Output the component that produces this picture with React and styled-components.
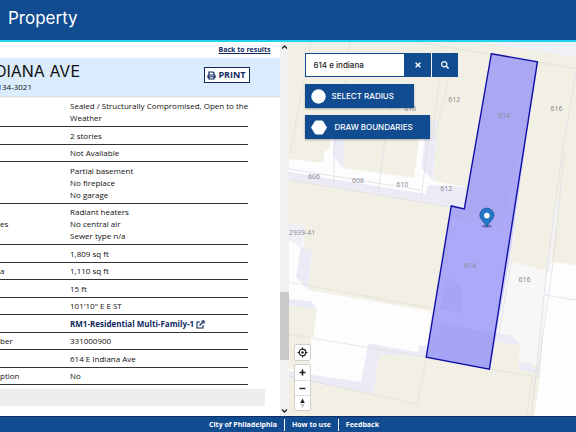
import React from "react";
import styled, { createGlobalStyle } from "styled-components";
import { FaTimes, FaSearch } from "react-icons/fa";

const NAVY = "#114c91";
const DARK = "#10285f";

const rows = [
  { label: "", values: ["Sealed / Structurally Compromised, Open to the", "Weather"] },
  { label: "", values: ["2 stories"] },
  { label: "", values: ["Not Available"] },
  { label: "", values: ["Partial basement", "No fireplace", "No garage"] },
  { label: "es", values: ["Radiant heaters", "No central air", "Sewer type n/a"] },
  { label: "", values: ["1,809 sq ft"] },
  { label: "a", values: ["1,110 sq ft"] },
  { label: "", values: ["15 ft"] },
  { label: "", values: ["101'10\" E E ST"] },
  { label: "", values: ["RM1-Residential Multi-Family-1"], link: true },
  { label: "ber", values: ["331000900"] },
  { label: "", values: ["614 E Indiana Ave"] },
  { label: "ption", values: ["No"] },
];

const parcelLabels = [
  { x: 454, y: 102, text: "612" },
  { x: 410, y: 111, text: "610" },
  { x: 504, y: 118, text: "614" },
  { x: 556, y: 111, text: "616" },
  { x: 314, y: 179, text: "606" },
  { x: 358, y: 183, text: "608" },
  { x: 402, y: 187, text: "610" },
  { x: 446, y: 191, text: "612" },
  { x: 302, y: 235, text: "2939-41" },
  { x: 470, y: 268, text: "614" },
  { x: 524, y: 282, text: "616" },
];

const PrintIcon = () => (
  <svg width="9" height="9" viewBox="0 0 18 18" fill="none" stroke={DARK} strokeWidth="2.400">
    <path d="M4 8V2h8l2 2v4M4 13H2v-4l1-1h12l1 1v4h-2M4 11.500h10V16H4z" />
  </svg>
);

const ExternalIcon = () => (
  <svg width="9" height="9" viewBox="0 0 18 18" fill="none" stroke={DARK} strokeWidth="2.200">
    <path d="M8 4H2v12h12v-6M7 11l9-9" />
    <path d="M10.500 2H16v5.500" />
  </svg>
);

const Chevron = ({ down }) => (
  <svg width="7" height="6" viewBox="0 0 7 6" fill="none" stroke="#222" strokeWidth="1.400">
    <path d={down ? "M1 1.500l2.500 2.500L6 1.500" : "M1 4.500L3.500 2 6 4.500"} />
  </svg>
);

const ParcelMap = () => (
  <MapSvg viewBox="289 42 287 374" preserveAspectRatio="xMidYMid slice">
    <rect x="0" y="0" width="900" height="900" fill="#f2f0e5" />
    {/* open ground */}
    <g fill="#fdfdfe">
      <path d="M289 159L323 163 324 153 330 148 332 120H346L343 168 414 178 421 120H437L433 181 466 187 464 209 450 206 289 178z" />
      <path d="M289 224L305 226 303 248 312 250 308 290 431 311 426 357 379 354 373 394 289 378V368L309 372 311 337 317 309 289 305z" />
      <path d="M551 262L576 265V416H534L540 373 546 272z" />
    </g>
    <path d="M289 305L317 309 313 338 311 337 309 372 289 368z" fill="#f2f0e5" />
    <path d="M508 261L547 271 538 366 519 362V345L511 335 496 333z" fill="#f7f7f8" />
    <path d="M508 261L511 262 519 200 516 200zM556 200H559L549 272H545z" fill="#f3f2f1" />
    {/* paved strips */}
    <g fill="#ebebf6">
      <path d="M480 42H576V58L545 52 512 48z" fill="#f0f0f7" />
      <path d="M289 172L425 194 428 185 466 187 464 209 450 206 289 179z" />
      <path d="M335 120H346L343 168 333 155z" />
      <path d="M427 120H437L433 181 421 168z" />
      <path d="M289 224L305 226 303 240 301 248 289 240z" fill="#f0eff6" />
      <path d="M301 247L312 250 308 290 296 277z" />
      <path d="M289 299L311 301 317 309 289 305z" />
      <path d="M289 371L361 382 368 343 418 352 419 345 427 346 426 357 379 354 373 394 289 378z" />
      <path d="M496 333L511 335 520 345 495 342zM518 361L530 363 540 374 518 369z" />
    </g>
    <g fill="none" stroke="#dadae6" strokeWidth="0.700">
      <path d="M289 180L450 207M289 169L420 190M334 140V185M385 139L378 192M428 140L421 198" />
      <path d="M576 70L562 150 546 272 531 416M564 150L553 260 537 374" />
      <path d="M545 295L576 300M511 260L498 338" />
    </g>
    <g fill="none" stroke="#e0ded3" strokeWidth="0.700">
      <path d="M420 43L576 69M311 42L290 155M350 42L338 138M455 52L434 139M442 52L432 139M385 139L393 100" />
      <path d="M289 282L431 308M289 334L426 357M289 376L417 404 426 360M490 369L540 377M532 376L526 416" />
    </g>
    {/* selected parcel */}
    <path d="M491 54L537 62 489 369 426 357 451 206 464 209z" fill="#6260ff" fillOpacity="0.500" />
    <path d="M519 145L525 147 509 260 490 369 426 357 435 300 444 270 451 218 502 226z" fill="#b0aeff" fillOpacity="0.450" />
    <g fill="#8d88e5" fillOpacity="0.180">
      <path d="M445 279L453 280 463 289 461 313 440 309z" />
      <path d="M434 322L495 333 490 368 428 357z" />
    </g>
    <path d="M491 54L537 62 489 369 426 357 451 206 464 209z" fill="none" stroke="#1010a8" strokeWidth="1.400" />
    <g fill="#8c8c96" fontSize="7" textAnchor="middle" fontFamily="'Noto Sans', 'Open Sans', sans-serif">
      {parcelLabels.map(({ x, y, text }) => (
        <text key={`${x}-${y}`} x={x} y={y}>
          {text}
        </text>
      ))}
    </g>
    <ellipse cx="486.500" cy="226" rx="5" ry="1.500" fill="#4a4a90" opacity="0.600" />
    <path
      d="M486.500 227C484.500 222 479.500 219.500 479.500 215a7 6.800 0 0 1 14 0C493.500 219.500 488.500 222 486.500 227z"
      fill="#2277c8"
      stroke="#175496"
      strokeWidth="0.800"
    />
    <circle cx="486.500" cy="215.500" r="2.800" fill="#fff" />
  </MapSvg>
);

const App = () => {
  return (
    <Page>
      <GlobalStyle />
      <Header>
        <Title>Property</Title>
      </Header>
      <Main>
        <Panel>
          <BackRow>
            <BackLink href="#results">Back to results</BackLink>
          </BackRow>
          <AddressBar>
            <Address>
              <Street>DIANA AVE</Street>
              <Zip>134-3021</Zip>
            </Address>
            <PrintButton type="button">
              <PrintIcon />
              PRINT
            </PrintButton>
          </AddressBar>
          <Details>
            <tbody>
              {rows.map(({ label, values, link }, i) => (
                <Row key={i}>
                  <Label scope="row">{label}</Label>
                  <Value>
                    {link ? (
                      <ZoningLink href="#zoning">
                        {values[0]} <ExternalIcon />
                      </ZoningLink>
                    ) : (
                      values.map((value) => <div key={value}>{value}</div>)
                    )}
                  </Value>
                </Row>
              ))}
            </tbody>
          </Details>
          <SectionBar />
        </Panel>
        <Scrollbar>
          <Chevron />
          <Track>
            <Thumb />
          </Track>
          <Chevron down />
        </Scrollbar>
        <MapArea>
          <ParcelMap />
          <Tools>
            <SearchBox>
              <SearchInput type="text" aria-label="Search" defaultValue="614 e indiana" />
              <IconButton type="button" aria-label="Clear">
                <FaTimes size={8} />
              </IconButton>
              <IconButton type="button" aria-label="Search" $gap>
                <FaSearch size={8} />
              </IconButton>
            </SearchBox>
            <ToolButton type="button" $width={109}>
              <svg width="15" height="15" viewBox="0 0 15 15">
                <circle cx="7.500" cy="7.500" r="7.200" fill="#fff" />
              </svg>
              SELECT RADIUS
            </ToolButton>
            <ToolButton type="button" $width={125} $wide>
              <svg width="16" height="15" viewBox="0 0 16 15">
                <path d="M4.500 1h7L15.500 7.500l-4 6.500h-7L0.500 7.500z" fill="#fff" stroke="#fff" strokeLinejoin="round" />
              </svg>
              DRAW BOUNDARIES
            </ToolButton>
          </Tools>
          <MapControls>
            <ControlGroup>
              <ControlButton type="button" aria-label="Locate">
                <svg width="11" height="11" viewBox="0 0 11 11" fill="none" stroke="#222">
                  <circle cx="5.500" cy="5.500" r="3.300" strokeWidth="1.300" />
                  <circle cx="5.500" cy="5.500" r="1.300" fill="#222" stroke="none" />
                  <path d="M5.500 0.500v2M5.500 8.500v2M0.500 5.500h2M8.500 5.500h2" />
                </svg>
              </ControlButton>
            </ControlGroup>
            <ControlGroup>
              <ControlButton type="button" aria-label="Zoom in">
                <svg width="7" height="7" viewBox="0 0 7 7" stroke="#222" strokeWidth="1.600">
                  <path d="M3.500 0.500v6M0.500 3.500h6" />
                </svg>
              </ControlButton>
              <ControlButton type="button" aria-label="Zoom out">
                <svg width="7" height="7" viewBox="0 0 7 7" stroke="#222" strokeWidth="1.400">
                  <path d="M0.500 3.500h6" />
                </svg>
              </ControlButton>
              <ControlButton type="button" aria-label="Reset bearing">
                <svg width="7" height="11" viewBox="0 0 7 11">
                  <path d="M3.500 0.500L5.800 5H1.200z" fill="#222" />
                  <path d="M3.500 10L5.500 6h-4z" fill="#bbb" />
                </svg>
              </ControlButton>
            </ControlGroup>
          </MapControls>
        </MapArea>
      </Main>
      <Footer>
        <FooterLink href="#city">City of Philadelphia</FooterLink>
        <FooterLink href="#help">How to use</FooterLink>
        <FooterLink href="#feedback">Feedback</FooterLink>
      </Footer>
    </Page>
  );
};

export default App;

//style
const GlobalStyle = createGlobalStyle`
  * {
    box-sizing: border-box;
  }

  body {
    margin: 0;
    overflow: hidden;
    font-family: "Open Sans", "Noto Sans", sans-serif;
    font-size: 8px;
    line-height: 12px;
    color: #111;
    background: #fff;
  }

  button, input {
    margin: 0;
    padding: 0;
    border: 0;
    font: inherit;
  }
`;

const Page = styled.div`
  display: flex;
  flex-direction: column;
  height: 100vh;
`;

const Header = styled.header`
  display: flex;
  align-items: center;
  height: 42px;
  padding: 0 8px 5px;
  background: ${NAVY};
  border-bottom: 2px solid #20d4ee;
  flex-shrink: 0;
`;

const Title = styled.h1`
  margin: 0;
  font-family: Inter, sans-serif;
  font-size: 17px;
  font-weight: 400;
  line-height: 24px;
  color: #fff;
`;

const Main = styled.main`
  display: flex;
  flex: 1;
  min-height: 0;
`;

const Panel = styled.section`
  flex: 35 1 0;
  min-width: 0;
  overflow: hidden;
`;

const BackRow = styled.div`
  display: flex;
  justify-content: flex-end;
  height: 16px;
  padding: 2px 9px 0 0;
`;

const BackLink = styled.a`
  font-size: 7px;
  font-weight: 700;
  color: ${DARK};
`;

const AddressBar = styled.div`
  display: flex;
  justify-content: space-between;
  align-items: flex-start;
  height: 38px;
  padding: 3px 30px 0 0;
  background: #daecfd;
  box-shadow: 0 1px 2px #ccd3da;
`;

const Address = styled.div`
  display: flex;
  flex-direction: column;
  align-items: flex-end;
  width: 80px;
`;

const Street = styled.h2`
  margin: 0;
  font-family: Inter, sans-serif;
  font-size: 16px;
  font-weight: 400;
  line-height: 20px;
  white-space: nowrap;
`;

const Zip = styled.div`
  margin-right: 48px;
  white-space: nowrap;
`;

const PrintButton = styled.button`
  display: flex;
  align-items: center;
  justify-content: center;
  gap: 2px;
  width: 46px;
  height: 16px;
  margin-top: 6px;
  border: 1px solid ${DARK};
  background: #fff;
  font-size: 9px;
  font-weight: 700;
  color: ${DARK};
`;

const Details = styled.table`
  width: 248px;
  margin-top: 2px;
  border-spacing: 0;
  table-layout: fixed;
`;

const Label = styled.th`
  width: 70px;
  padding: 2px 0;
  font-weight: 400;
  text-align: left;
  vertical-align: middle;
  border-bottom: 1px solid #333;
`;

const Value = styled.td`
  padding: 2px 0;
  border-bottom: 1px solid #333;
  white-space: nowrap;
`;

const Row = styled.tr`
  &:nth-child(even) > * {
    padding-top: 3px;
  }
`;

const ZoningLink = styled.a`
  display: flex;
  align-items: center;
  gap: 2px;
  font-weight: 700;
  color: ${DARK};
  text-decoration: none;
`;

const SectionBar = styled.div`
  height: 17px;
  margin: 4px 15px 0 0;
  background: #eee;
`;

const Scrollbar = styled.div`
  display: flex;
  flex-direction: column;
  align-items: center;
  width: 9px;
  padding: 2px 0;
  background: #f1f1f1;
`;

const Track = styled.div`
  display: flex;
  flex: 1;
  flex-direction: column;
  justify-content: flex-end;
  width: 100%;
  padding-bottom: 48px;
`;

const Thumb = styled.div`
  height: 22%;
  background: #c9c9c9;
`;

const MapArea = styled.section`
  position: relative;
  flex: 36 1 0;
  min-width: 0;
  overflow: hidden;
`;

const MapSvg = styled.svg`
  display: block;
  width: 100%;
  height: 100%;
`;

const Tools = styled.div`
  position: absolute;
  top: 11px;
  left: 16px;
  display: flex;
  flex-direction: column;
  gap: 7px;
`;

const SearchBox = styled.div`
  display: flex;
  height: 24px;
`;

const SearchInput = styled.input`
  width: 100px;
  padding: 0 8px;
  border: 1px solid ${NAVY};
  background: #fff;
  font-family: Inter, sans-serif;
  font-size: 8px;
  font-weight: 500;
  color: #222;
`;

const IconButton = styled.button`
  display: flex;
  align-items: center;
  justify-content: center;
  width: 26px;
  margin-left: ${({ $gap }) => ($gap ? "1px" : "0")};
  background: ${NAVY};
  color: #fff;
`;

const ToolButton = styled.button`
  display: flex;
  align-items: center;
  gap: ${({ $wide }) => ($wide ? "8px" : "6px")};
  width: ${({ $width }) => $width}px;
  height: 24px;
  padding-left: 6px;
  background: ${NAVY};
  box-shadow: 0 1px 2px rgba(0, 0, 0, 0.3);
  font-family: Inter, sans-serif;
  font-size: 8px;
  font-weight: 500;
  color: #fff;
  white-space: nowrap;
`;

const MapControls = styled.div`
  position: absolute;
  bottom: 5px;
  left: 5px;
  display: flex;
  flex-direction: column;
  gap: 3px;
`;

const ControlGroup = styled.div`
  width: 17px;
  border: 1px solid #d0d0cc;
  border-radius: 2px;
  background: #fff;
`;

const ControlButton = styled.button`
  display: flex;
  align-items: center;
  justify-content: center;
  width: 100%;
  height: 15px;
  background: transparent;

  & + & {
    border-top: 1px solid #ddd;
  }
`;

const Footer = styled.footer`
  display: flex;
  align-items: center;
  justify-content: center;
  height: 16px;
  padding: 0 0 0 12px;
  border-top: 1px solid #0c2d66;
  background: ${NAVY};
  flex-shrink: 0;
`;

const FooterLink = styled.a`
  padding: 0 7px;
  font-size: 7px;
  font-weight: 700;
  color: #fff;
  text-decoration: none;

  & + & {
    border-left: 1px solid #fff;
  }
`;
